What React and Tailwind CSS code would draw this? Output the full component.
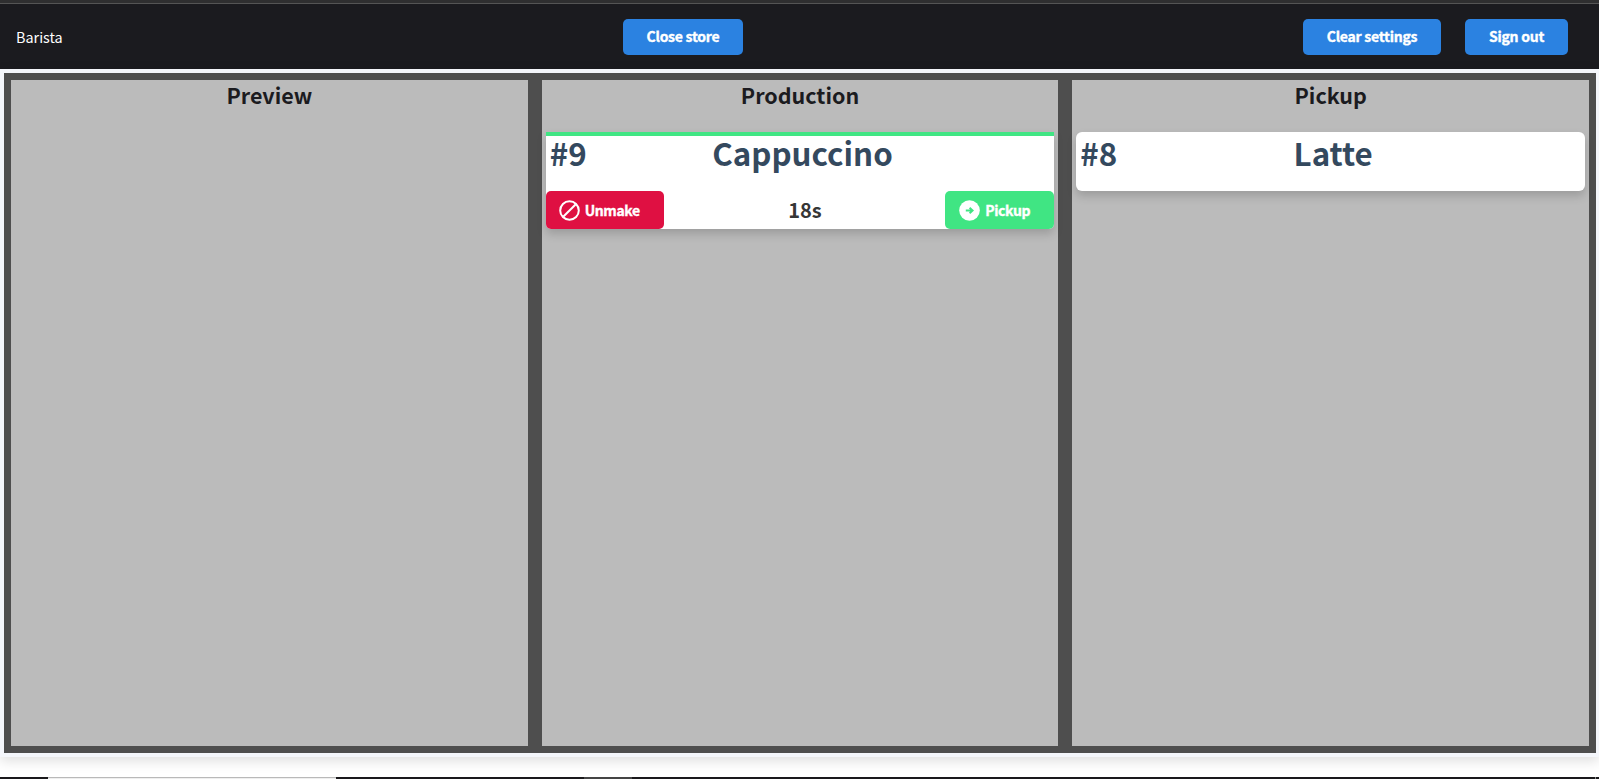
function NavButton({ className = "", children }) {
  return (
    <button
      className={`flex h-9 items-center justify-center rounded-[5px] bg-[#2b82e1] pb-0.5 text-[14px] leading-none font-bold tracking-[-0.25px] text-white [-webkit-text-stroke:0.35px_white] ${className}`}
    >
      {children}
    </button>
  );
}

function Column({ title, children }) {
  return (
    <section className="min-w-0 flex-1 border-7 border-[#4e4e4e] bg-[#bbbbbb] px-1">
      <h2 className="h-[52px] text-center text-[21.5px] leading-[30px] font-bold text-[#1b1b1f]">{title}</h2>
      {children}
    </section>
  );
}

function OrderTitle({ number, name, className }) {
  return (
    <div className={`grid items-start px-1 text-[31.3px] leading-[34px] font-bold text-[#34495e] ${className}`}>
      <span className="col-start-1 row-start-1 justify-self-start">{number}</span>
      <span className="col-start-1 row-start-1 justify-self-center pl-[5px]">{name}</span>
    </div>
  );
}

function ActionButton({ className = "", children }) {
  return (
    <button
      className={`flex h-full items-center gap-[5px] rounded-[5px] text-[14px] leading-none font-bold tracking-[-0.4px] text-white [-webkit-text-stroke:0.35px_white] ${className}`}
    >
      {children}
    </button>
  );
}

function BanIcon() {
  return (
    <svg className="size-[21px] shrink-0" viewBox="0 0 21 21" fill="none" stroke="#fff" strokeWidth="2">
      <circle cx="10.5" cy="10.5" r="9.3" />
      <path d="M4.2 16.8 16.8 4.2" />
    </svg>
  );
}

function ArrowIcon() {
  return (
    <svg className="size-[21px] shrink-0" viewBox="0 0 21 21" fill="none">
      <circle cx="10.5" cy="10.5" r="10.3" fill="#fff" />
      <path d="M6.8 10.5h6M10.6 7.8l3 2.7-3 2.7" stroke="#40e583" strokeWidth="1.9" />
    </svg>
  );
}

export default function App() {
  return (
    <div className="flex h-[779px] w-full flex-col overflow-hidden bg-white font-['Noto_Sans_CJK_SC',sans-serif]">
      <div className="h-1 shrink-0 border-b border-[#555555] bg-[#2f2f30]" />
      <header className="flex h-[65px] shrink-0 items-start bg-[#1b1b1f] pt-[15px] pr-[31px] pl-4">
        <span className="w-[607px] pt-1.5 text-[14.4px] leading-6 text-white">Barista</span>
        <NavButton className="w-[120px]">Close store</NavButton>
        <div className="ml-auto flex gap-6">
          <NavButton className="w-[138px]">Clear settings</NavButton>
          <NavButton className="w-[103px]">Sign out</NavButton>
        </div>
      </header>
      <main className="flex h-[688px] shrink-0 bg-[#f4f6fb] p-1 pr-[3px] shadow-[0_4px_12px_rgba(0,0,0,0.13)]">
        <Column title="Preview" />
        <Column title="Production">
          <article className="rounded-b-[5px] border-t-4 border-[#40e583] bg-white shadow-[0_5px_10px_rgba(0,0,0,0.17)]">
            <OrderTitle number="#9" name="Cappuccino" className="h-[55px]" />
            <div className="flex h-[38px] items-center justify-between">
              <ActionButton className="w-[118px] bg-[#df1042] pl-[13px]">
                <BanIcon />
                <span className="pb-px">Unmake</span>
              </ActionButton>
              <span className="pl-px text-[20px] leading-8 font-bold text-[#363636]">18s</span>
              <ActionButton className="w-[109px] bg-[#40e583] pl-[14px]">
                <ArrowIcon />
                <span className="pb-px">Pickup</span>
              </ActionButton>
            </div>
          </article>
        </Column>
        <Column title="Pickup">
          <article className="rounded-md bg-white shadow-[0_5px_10px_rgba(0,0,0,0.17)]">
            <OrderTitle number="#8" name="Latte" className="h-[59px] pt-1" />
          </article>
        </Column>
      </main>
      <div className="mt-auto flex h-0.5 shrink-0 bg-[#1a191c]">
        <div className="ml-12 w-72 border-t border-[#b9b9b9] bg-[#eeeeee]" />
        <div className="ml-[248px] w-12 bg-[#454545]" />
        <div className="ml-auto mr-[3px] w-px bg-[#888888]" />
      </div>
    </div>
  );
}
